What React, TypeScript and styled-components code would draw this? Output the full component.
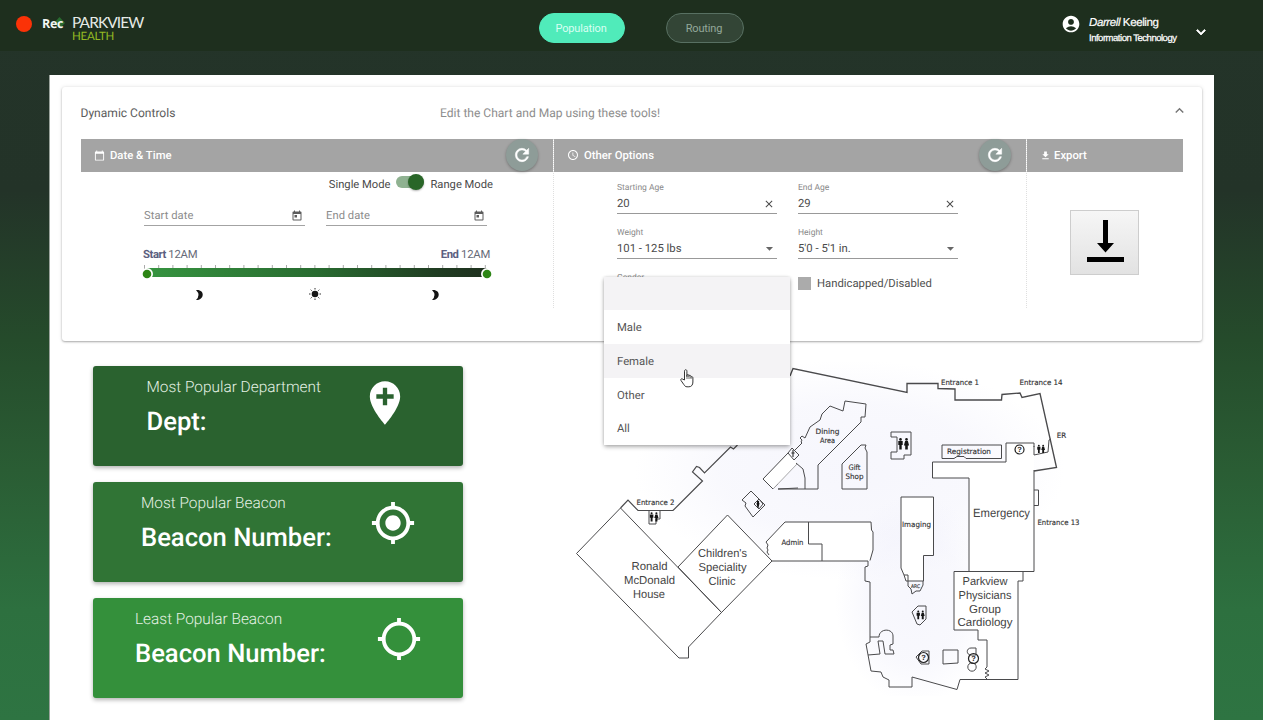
import React from "react";
import styled, { createGlobalStyle } from "styled-components";
import {
  MdAccountCircle,
  MdAddLocation,
  MdArrowDropDown,
  MdCalendarToday,
  MdClose,
  MdExpandLess,
  MdExpandMore,
  MdFileDownload,
  MdGpsFixed,
  MdGpsNotFixed,
  MdRefresh,
  MdSchedule,
  MdToday,
} from "react-icons/md";

const GlobalStyle = createGlobalStyle`
  * { box-sizing: border-box; }
  body { margin: 0; font-family: Roboto, "Liberation Sans", sans-serif; text-rendering: geometricPrecision; }
  svg { display: block; flex: none; }
  button { font: inherit; cursor: pointer; }
`;

const Page = styled.div`
  height: 720px;
  overflow: hidden;
  background: linear-gradient(180deg, #243429 0, #233328 190px, #254b2b 340px, #2a5d34 470px, #2d703f 610px, #2e7442 720px);
`;

const Header = styled.header`
  display: grid;
  grid-template-columns: 538px 1fr 202px;
  height: 51px;
  background: #1e2f1e;
`;

const Brand = styled.div`
  display: flex;
  padding: 14px 0 0 16px;
`;

const RecordDot = styled.span`
  width: 16px;
  height: 16px;
  margin-top: 2px;
  border-radius: 50%;
  background: #fb3207;
`;

const RecText = styled.span`
  display: flex;
  width: 29px;
  height: 18px;
  margin: 1px 0 0 10px;
  font: 700 12.5px/18px "Open Sans", sans-serif;
  letter-spacing: -0.3px;
  color: #f3f6f3;
`;

const LeafMark = styled.svg`
  margin: 1px 0 0 -10px;
`;

const RecWord = styled.span`
  position: relative;
  z-index: 1;
`;

const LogoText = styled.div`
  display: flex;
  flex-direction: column;
  margin-left: 1px;
  font-family: Lato, sans-serif;
`;

const LogoName = styled.span`
  font-size: 15.5px;
  line-height: 18px;
  letter-spacing: -0.95px;
  color: #e6ebe6;
`;

const LogoSub = styled.span`
  margin-top: -1px;
  font-size: 11.5px;
  line-height: 11px;
  letter-spacing: -0.25px;
  color: #93b822;
`;

const Tabs = styled.nav`
  display: flex;
  align-items: flex-start;
  gap: 41px;
  padding: 13px 0 0 1px;
`;

const Tab = styled.button<{ $active?: boolean }>`
  width: ${(p) => (p.$active ? 86 : 78)}px;
  height: 30px;
  padding: 1px 3px 0 1px;
  border: 1px solid ${(p) => (p.$active ? "#50ebba" : "#587062")};
  border-radius: 15px;
  background: ${(p) => (p.$active ? "#50ebba" : "#334536")};
  color: ${(p) => (p.$active ? "#d8fff2" : "#94a89a")};
  font-size: 11px;
  line-height: 27px;
  letter-spacing: -0.15px;
`;

const User = styled.div`
  display: flex;
  padding: 14px 0 0 0;
  color: #fff;
`;

const UserText = styled.div`
  display: flex;
  flex-direction: column;
  width: 95px;
  margin: 1px 7.5px 0 8px;
  white-space: nowrap;
`;

const UserName = styled.span`
  font: 11.5px/16px "Liberation Sans", sans-serif;
  letter-spacing: -0.4px;
  -webkit-text-stroke: 0.2px #fff;
`;

const UserDept = styled.span`
  margin-top: 0.5px;
  font: 9.5px/14px "Liberation Sans", sans-serif;
  letter-spacing: -0.48px;
  -webkit-text-stroke: 0.25px #fff;
`;

const Caret = styled.span`
  margin-top: 9px;
  path:last-child { stroke: currentColor; stroke-width: 1px; }
`;

const Sheet = styled.main`
  width: 1165px;
  height: 660px;
  margin: 24px 0 0 49px;
  padding: 12px 12px 0 11.5px;
  border-left: 1px solid #9aa39c;
  background: #fff;
`;

const ControlCard = styled.section`
  height: 254px;
  padding: 0 19px;
  border-radius: 3px;
  background: #fff;
  box-shadow: 0 1px 2px rgba(0, 0, 0, 0.3), 0 0 4px rgba(0, 0, 0, 0.1);
`;

const CardTitleRow = styled.div`
  display: flex;
  align-items: center;
  height: 51.5px;
  padding-top: 1px;
  font-size: 12.05px;
`;

const CardTitle = styled.span`
  width: 359.5px;
  color: #5c5c5c;
`;

const CardHint = styled.span`
  flex: 1;
  color: #8d8d8d;
`;

const Collapse = styled.span`
  margin: -6px -5px 0 0;
  color: #757575;
`;

const Panels = styled.div`
  display: grid;
  grid-template-columns: 473px 473px 156.5px;
  height: 169px;
`;

const Panel = styled.div`
  position: relative;
  height: 169px;
  border-right: 1px dotted #dfdfdf;
  &:last-child { border-right: 0; }
`;

const PanelHead = styled.div`
  display: flex;
  align-items: center;
  gap: 5px;
  height: 33px;
  padding: 0 15px 0 13.5px;
  background: #a4a4a4;
  color: #fff;
  font-size: 11.3px;
  font-weight: 500;
`;

const ExportHead = styled(PanelHead)`
  gap: 3px;
`;

const PanelName = styled.span`
  flex: 1;
`;

const RefreshButton = styled.button`
  display: flex;
  align-items: center;
  justify-content: center;
  width: 32px;
  height: 32px;
  padding: 0;
  border: 0;
  border-radius: 50%;
  background: #8e9c98;
  color: #fff;
  box-shadow: 0 1px 3px rgba(0, 0, 0, 0.3);
  path:last-child { stroke: currentColor; stroke-width: 0.6px; }
`;

const ModeRow = styled.div`
  display: flex;
  align-items: center;
  justify-content: flex-end;
  height: 24px;
  padding: 1px 59.5px 0 0;
  font-size: 11.2px;
  color: #4a4a4a;
`;

const Toggle = styled.span`
  display: flex;
  align-items: center;
  justify-content: flex-end;
  width: 28px;
  height: 12px;
  margin: -4px 6px 0 6px;
  border-radius: 6px;
  background: #8fb291;
`;

const ToggleKnob = styled.span`
  width: 16px;
  height: 16px;
  border-radius: 50%;
  background: #296628;
  box-shadow: 0 1px 2px rgba(0, 0, 0, 0.3);
`;

const DateFields = styled.div`
  display: flex;
  gap: 21px;
  padding: 9px 0 0 63.5px;
`;

const DateField = styled.div`
  display: flex;
  align-items: center;
  justify-content: space-between;
  width: 161px;
  height: 21.5px;
  padding: 2px 2.5px 0 0;
  border-bottom: 1px solid #a3a3a3;
  color: #8c8c8c;
  font-size: 11.2px;
  letter-spacing: 0.05px;
  svg { color: #5c5c5c; }
`;

const TimeRange = styled.div`
  width: 347px;
  margin: 21px 0 0 62.5px;
`;

const TimeLabels = styled.div`
  display: flex;
  justify-content: space-between;
  height: 15.5px;
  font-size: 11.3px;
  line-height: 16px;
  letter-spacing: -0.25px;
  color: #666a78;
  b { font-weight: 700; color: #5c6080; letter-spacing: -0.45px; }
`;

const SliderTrack = styled.svg`
  margin-left: -1px;
`;

const OptionGrid = styled.div`
  display: grid;
  grid-template-columns: 160px 160px;
  column-gap: 21px;
  padding: 9px 0 0 63.5px;
`;

const Option = styled.label`
  display: flex;
  flex-direction: column;
  height: 45.3px;
`;

const OptionLabel = styled.span`
  font-size: 8.5px;
  line-height: 14px;
  color: #8a8a8a;
`;

const OptionValue = styled.span`
  display: flex;
  align-items: center;
  justify-content: space-between;
  height: 19px;
  padding: 0 2px 0 0;
  border-bottom: 1px solid #999;
  font-size: 11.3px;
  color: #4a4a4a;
`;

const DropArrow = styled.span`
  margin-right: -3px;
  color: #666;
`;

const CheckOption = styled.label`
  display: flex;
  align-items: center;
  gap: 6px;
  height: 20px;
  margin-top: 2px;
  font-size: 11.3px;
  color: #505050;
`;

const CheckBox = styled.span`
  width: 13px;
  height: 13px;
  background: #ababab;
`;

const ExportBody = styled.div`
  display: flex;
  justify-content: center;
  padding-top: 38px;
`;

const ExportButton = styled.button`
  display: flex;
  align-items: center;
  justify-content: center;
  width: 69px;
  height: 65px;
  padding: 0 0 2px;
  border: 1px solid #cdcdcd;
  background: linear-gradient(#f6f6f6, #e2e2e2);
`;

const Menu = styled.div`
  position: absolute;
  top: 138px;
  left: 50px;
  z-index: 2;
  width: 186px;
  border-radius: 2px;
  background: #fff;
  box-shadow: 0 2px 4px rgba(0, 0, 0, 0.3), 0 0 3px rgba(0, 0, 0, 0.14);
`;

const MenuItem = styled.div<{ $shade?: boolean }>`
  height: 33.7px;
  padding-left: 13.5px;
  background: ${(p) => (p.$shade ? "#f4f3f5" : "#fff")};
  font-size: 11.3px;
  line-height: 35px;
  color: #555;
`;

const Pointer = styled.svg`
  position: absolute;
  top: 91px;
  left: 75px;
`;

const Lower = styled.div`
  display: grid;
  grid-template-columns: 370px 1fr;
  column-gap: 107px;
  padding: 25px 0 0 31.5px;
`;

const Stats = styled.div`
  display: flex;
  flex-direction: column;
  gap: 16px;
`;

const Stat = styled.article<{ $tone: string; $inset: number }>`
  display: flex;
  height: 100px;
  padding-left: ${(p) => p.$inset}px;
  border-radius: 3px;
  background: ${(p) => p.$tone};
  color: #fff;
  box-shadow: 0 2px 4px rgba(0, 0, 0, 0.3);
`;

const StatText = styled.div<{ $width: number }>`
  display: flex;
  flex-direction: column;
  width: ${(p) => p.$width}px;
  padding-top: 11px;
  white-space: nowrap;
`;

const StatLabel = styled.span`
  font-size: 15.4px;
  font-weight: 300;
  line-height: 20px;
  color: #e6f2e6;
`;

const StatValue = styled.span`
  margin-top: 7.5px;
  font-size: 25.6px;
  font-weight: 500;
  line-height: 34px;
`;

const StatIcon = styled.span<{ $drop: number }>`
  margin-top: ${(p) => p.$drop}px;
`;

const MapSvg = styled.svg`
  margin-top: -6px;
  fill: none;
  stroke: #4a4a4c;
  stroke-width: 1;
`;

type LabelProps = { x: number; y: number; w: number; size: number; children: string; wide?: boolean };

const MapLabel = ({ x, y, w, size, children, wide }: LabelProps) => (
  <text
    x={x}
    y={y}
    textAnchor="middle"
    textLength={w}
    lengthAdjust="spacingAndGlyphs"
    fontSize={size}
    fontFamily={wide ? '"DejaVu Sans", sans-serif' : '"Liberation Sans", sans-serif'}
    fill={wide ? "#333" : "#444"}
    stroke={wide ? "#333" : "none"}
    strokeWidth={0.15}
  >
    {children}
  </text>
);

const Restroom = ({ x, y, s = 1 }: { x: number; y: number; s?: number }) => (
  <g transform={`translate(${x} ${y}) scale(${s})`} fill="#151515" stroke="none">
    <circle cx="-3" cy="-4.6" r="1.3" />
    <path d="M-5.2-3h4.4v4h-1v4.5h-2.4V1h-1z" />
    <circle cx="3" cy="-4.6" r="1.3" />
    <path d="M1.6-3h2.8L5.6 1.4H4.3v4.1H1.7V1.4H.4z" />
  </g>
);

const Help = ({ x, y, r }: { x: number; y: number; r: number }) => (
  <g>
    <circle cx={x} cy={y} r={r} strokeWidth={1.2} stroke="#222" />
    <text x={x} y={y + 2.6} textAnchor="middle" fontSize="7.5" fontWeight="700" fontFamily="Liberation Sans, sans-serif" fill="#222" stroke="none">
      ?
    </text>
  </g>
);

const FloorMap = () => (
  <MapSvg width="520" height="336" viewBox="570 360 520 336">
    <defs>
      <radialGradient id="hall">
        <stop offset="0" stopColor="#ececfa" stopOpacity="0.45" />
        <stop offset="0.6" stopColor="#ececfa" stopOpacity="0.34" />
        <stop offset="1" stopColor="#ececfa" stopOpacity="0" />
      </radialGradient>
    </defs>
    <g stroke="none" fill="url(#hall)">
      <ellipse cx="850" cy="470" rx="215" ry="110" />
      <ellipse cx="915" cy="600" rx="80" ry="105" />
    </g>
    <path
      fill="#fff"
      d="M620.5 508 576.5 553.5 679 658h9.5v-11L772 561l-44.5-46L678 567z M785 522h86l.5 8 1.5 2v18l-3 10-2 1H772l-3-7-2-4 1-5-2-3z M969 478h-36.500v-16h73.500v-19h28v128.500h-65z M954 571.500h69v10.500h-5v98.500h-31V640h-9v-10h-24z M763 479l25-26 9 10-24 26z M901 497h32.500v58.500h-10V581H906l-5-13z"
      stroke="none"
    />
    <path
      strokeWidth="1.35"
      d="M790 376l3-7.500 114 24v-9h31v5l17 .5v11h46.500l.5-5.500 18-1.500 2 4.500 18-4 16.500 74-22.500 3.500"
    />
    <path d="M620.500 508l7.500-8 10 10.500h35l29.500-29.500-10-9 4-5.500 3 1 5 5.500 26-26 3 2 4-4" strokeWidth="1.2" />
    <path d="M620.500 508l-44 45.500L679 658h9.500v-11l33-34.500zM727.500 515l44.500 46-50.500 51.500L678 567z" />
    <path d="M649 511v13h7v-5h4v-8M751 491l-9 9 4 3-1 3 8 11 12-12zM759 499l-5 5 5 5 4-5z" />
    <path d="M772 561h96M785 522h86l.5 8 1.500 2v18l-3 10.500M785 522l-19 20 2 3-1 3 1 2-1 2 2 3M808.500 522v22H822v17" />
    <path d="M778 489h40v-24l43-43v-5h4l1-13-21-3-2 10-13-5-8 8-2 6-10 7-5 11-3-2-2 2 2 2-1 2 1 1-8 8M778 489l20-1M788 453l-25 26 10 10 5-5M788 453l4-5 7 7-5 5zM796 463l7 6 2 9v11" />
    <path d="M773 489l24-25" stroke="#aaa" />
    <path d="M842 489v-25l19-19h5l-1 3 2 4v37zM891 432h20v23h-7v4h-13v-7h6v-15h-6z" />
    <path d="M942 445h59.500v13.500H966l-2-2h-7l-3 2h-12zM969 478h-36.500v-16h73.500v-19h28v4M1034 470v101.500h-65V478M1034 446v9l14-3 1-12 2-1M1034 490h4.500v15.500h-4.500" />
    <path d="M901 497h32.500v58.500h-10V581H906l-2-6-3-7zM904 575h4v6M908 581v5l3 3 1 5 4-3h4l3-6v-4" />
    <path d="M912 612l6-6h8v13l-6 6-3-1z" />
    <path d="M868 561v5l-3 1v14l5 1v55h9c0-9 14-9 14-1v8l-3 1v5h3l1 4h-9l-2-13h-5l2 13-12 1M870 637v5l-4 2 5 27 10 1 2 5 6 3v7h23v-10l45 12.500 3-10h58v-98.500h5V571.500H954V630h24v10h9v27" />
    <path d="M987 667l-2 2 4 2-4 2 4 2-4 2 3 3M943 650h15v13l-15 1z" />
    <path d="M916 657l6-6h7v13h-8z" />
    <path d="M976 655v-7h-5c-5 0-5 7 0 7z" />
    <circle cx="972" cy="667" r="4.200" />
    <Restroom x={654} y={517} s={0.8} />
    <Restroom x={903.500} y={444} />
    <Restroom x={1041} y={449} s={0.72} />
    <Restroom x={920.500} y={615} s={0.75} />
    <circle cx="758" cy="502" r="1.200" fill="#111" stroke="none" />
    <path d="M756.500 503h3l-1 5h-1z" fill="#111" stroke="none" />
    <path d="M793 450v7M791.500 453h3" strokeWidth="1.300" />
    <Help x={1019.500} y={449.500} r={4.500} />
    <Help x={923.500} y={657.500} r={5} />
    <Help x={973.500} y={658.500} r={5} />
    <MapLabel wide x={960} y={385} w={38} size={7.500}>Entrance 1</MapLabel>
    <MapLabel wide x={1041} y={384.500} w={43} size={7.500}>Entrance 14</MapLabel>
    <MapLabel wide x={1061.500} y={437.500} w={9.500} size={7.500}>ER</MapLabel>
    <MapLabel wide x={969} y={454} w={44} size={7.500}>Registration</MapLabel>
    <MapLabel wide x={1058.500} y={525} w={42} size={7.500}>Entrance 13</MapLabel>
    <MapLabel wide x={655.500} y={504.500} w={38} size={7.500}>Entrance 2</MapLabel>
    <MapLabel wide x={916.500} y={527} w={29} size={7.500}>Imaging</MapLabel>
    <MapLabel wide x={792.500} y={544.500} w={22} size={7.500}>Admin</MapLabel>
    <MapLabel wide x={827.500} y={433.500} w={24} size={7.500}>Dining</MapLabel>
    <MapLabel wide x={827.500} y={442.500} w={15} size={7.500}>Area</MapLabel>
    <MapLabel wide x={854.500} y={470} w={12} size={7.500}>Gift</MapLabel>
    <MapLabel wide x={854.500} y={479} w={18} size={7.500}>Shop</MapLabel>
    <MapLabel wide x={915.500} y={588} w={9} size={5}>ARC</MapLabel>
    <MapLabel x={1001.500} y={517} w={57} size={12}>Emergency</MapLabel>
    <MapLabel x={649.500} y={570} w={36} size={11.500}>Ronald</MapLabel>
    <MapLabel x={649.500} y={583.500} w={51} size={11.500}>McDonald</MapLabel>
    <MapLabel x={649} y={597.500} w={32} size={11.500}>House</MapLabel>
    <MapLabel x={722.500} y={557} w={49} size={11.500}>Children's</MapLabel>
    <MapLabel x={722.500} y={571} w={48} size={11.500}>Speciality</MapLabel>
    <MapLabel x={722} y={584.500} w={27} size={11.500}>Clinic</MapLabel>
    <MapLabel x={985} y={585} w={45} size={11.500}>Parkview</MapLabel>
    <MapLabel x={985} y={599} w={53} size={11.500}>Physicians</MapLabel>
    <MapLabel x={985} y={612.500} w={32} size={11.500}>Group</MapLabel>
    <MapLabel x={985} y={626} w={55} size={11.500}>Cardiology</MapLabel>
  </MapSvg>
);

const TimeSlider = () => (
  <SliderTrack width="350" height="42" viewBox="0 0 350 42">
    <defs>
      <linearGradient id="day">
        <stop offset="0" stopColor="#369440" />
        <stop offset="0.5" stopColor="#286b30" />
        <stop offset="0.85" stopColor="#203d22" />
        <stop offset="1" stopColor="#1e301e" />
      </linearGradient>
    </defs>
    {Array.from({ length: 25 }, (_, i) => (
      <path key={i} d={`M${2.5 + i * 14.2} 2v4`} stroke="#a9aaa9" />
    ))}
    <rect x="5" y="5" width="340" height="9" fill="url(#day)" />
    <circle cx="5" cy="11" r="6" fill="#fff" />
    <circle cx="5" cy="11" r="4.300" fill="#2d8515" />
    <circle cx="345" cy="11" r="6" fill="#fff" />
    <circle cx="345" cy="11" r="4.300" fill="#2d8515" />
    <path d="M54 27c9-1 9 10 0 10q5-5 0-10z" fill="#141414" />
    <path d="M290 27c9-1 9 10 0 10q5-5 0-10z" fill="#141414" />
    <circle cx="173" cy="31" r="3.300" fill="#171717" />
    <path d="M173 25v1.500M173 35.500v1.500M167 31h1.500M177.500 31h1.500M168.700 26.700l1 1M176.300 34.300l1 1M168.700 35.300l1-1M176.300 27.700l1-1" stroke="#333" />
  </SliderTrack>
);

export default function App() {
  return (
    <Page>
      <GlobalStyle />
      <Header>
        <Brand>
          <RecordDot />
          <RecText>
            <RecWord>Rec</RecWord>
            <LeafMark width="13" height="14" viewBox="0 0 13 14">
              <path d="M6.500 1 12 7l-5.500 5.500L1 7z" fill="#286b2f" />
            </LeafMark>
          </RecText>
          <LogoText>
            <LogoName>PARKVIEW</LogoName>
            <LogoSub>HEALTH</LogoSub>
          </LogoText>
        </Brand>
        <Tabs>
          <Tab $active>Population</Tab>
          <Tab>Routing</Tab>
        </Tabs>
        <User>
          <MdAccountCircle size={20} />
          <UserText>
            <UserName><i>Darrell</i> Keeling</UserName>
            <UserDept>Information Technology</UserDept>
          </UserText>
          <Caret><MdExpandMore size={18} /></Caret>
        </User>
      </Header>
      <Sheet>
        <ControlCard>
          <CardTitleRow>
            <CardTitle>Dynamic Controls</CardTitle>
            <CardHint>Edit the Chart and Map using these tools!</CardHint>
            <Collapse><MdExpandLess size={17} /></Collapse>
          </CardTitleRow>
          <Panels>
            <Panel>
              <PanelHead>
                <MdCalendarToday size={11} />
                <PanelName>Date &amp; Time</PanelName>
                <RefreshButton><MdRefresh size={20} /></RefreshButton>
              </PanelHead>
              <ModeRow>Single Mode<Toggle><ToggleKnob /></Toggle>Range Mode</ModeRow>
              <DateFields>
                <DateField>Start date<MdToday size={12} /></DateField>
                <DateField>End date<MdToday size={12} /></DateField>
              </DateFields>
              <TimeRange>
                <TimeLabels>
                  <span><b>Start</b> 12AM</span>
                  <span><b>End</b> 12AM</span>
                </TimeLabels>
                <TimeSlider />
              </TimeRange>
            </Panel>
            <Panel>
              <PanelHead>
                <MdSchedule size={12} />
                <PanelName>Other Options</PanelName>
                <RefreshButton><MdRefresh size={20} /></RefreshButton>
              </PanelHead>
              <OptionGrid>
                <Option>
                  <OptionLabel>Starting Age</OptionLabel>
                  <OptionValue>20<MdClose size={12} /></OptionValue>
                </Option>
                <Option>
                  <OptionLabel>End Age</OptionLabel>
                  <OptionValue>29<MdClose size={12} /></OptionValue>
                </Option>
                <Option>
                  <OptionLabel>Weight</OptionLabel>
                  <OptionValue>101 - 125 lbs<DropArrow><MdArrowDropDown size={17} /></DropArrow></OptionValue>
                </Option>
                <Option>
                  <OptionLabel>Height</OptionLabel>
                  <OptionValue>5'0 - 5'1 in.<DropArrow><MdArrowDropDown size={17} /></DropArrow></OptionValue>
                </Option>
                <Option>
                  <OptionLabel>Gender</OptionLabel>
                </Option>
                <CheckOption><CheckBox />Handicapped/Disabled</CheckOption>
              </OptionGrid>
              <Menu>
                <MenuItem $shade />
                <MenuItem>Male</MenuItem>
                <MenuItem $shade>Female</MenuItem>
                <MenuItem>Other</MenuItem>
                <MenuItem>All</MenuItem>
                <Pointer width="17" height="21" viewBox="0 0 17 21">
                  <path
                    d="M5.500 12V3.200c0-2 2.400-2 2.400 0v5.300-1.200c0-1 2-1 2 .2v1-.5c0-1 2-1 2 .3v1c0-1 2-.9 2 .4v4.300c0 2.800-1.400 4.800-4 4.800H8c-1.600 0-2.400-1-3.200-2.300L2 12.500c-.8-1.500.8-2.300 1.800-1.300z"
                    fill="#fff"
                    stroke="#333"
                  />
                  <path d="M8 8v3M10 8.500V11M12 9v2" stroke="#444" strokeWidth="0.800" />
                </Pointer>
              </Menu>
            </Panel>
            <Panel>
              <ExportHead>
                <MdFileDownload size={11} />
                <PanelName>Export</PanelName>
              </ExportHead>
              <ExportBody>
                <ExportButton>
                  <svg width="38" height="44" viewBox="0 0 38 44">
                    <path d="M17 1h5v23h6l-8.500 9.500L11 24h6zM1 38h37v5H1z" fill="#000" />
                  </svg>
                </ExportButton>
              </ExportBody>
            </Panel>
          </Panels>
        </ControlCard>
        <Lower>
          <Stats>
            <Stat $tone="#2a622f" $inset={53.5}>
              <StatText $width={212}>
                <StatLabel>Most Popular Department</StatLabel>
                <StatValue>Dept:</StatValue>
              </StatText>
              <StatIcon $drop={11}><MdAddLocation size={52} /></StatIcon>
            </Stat>
            <Stat $tone="#307435" $inset={48}>
              <StatText $width={229}>
                <StatLabel>Most Popular Beacon</StatLabel>
                <StatValue>Beacon Number:</StatValue>
              </StatText>
              <StatIcon $drop={18}><MdGpsFixed size={46} /></StatIcon>
            </Stat>
            <Stat $tone="#34903b" $inset={42}>
              <StatText $width={241}>
                <StatLabel>Least Popular Beacon</StatLabel>
                <StatValue>Beacon Number:</StatValue>
              </StatText>
              <StatIcon $drop={18}><MdGpsNotFixed size={46} /></StatIcon>
            </Stat>
          </Stats>
          <FloorMap />
        </Lower>
      </Sheet>
    </Page>
  );
}
